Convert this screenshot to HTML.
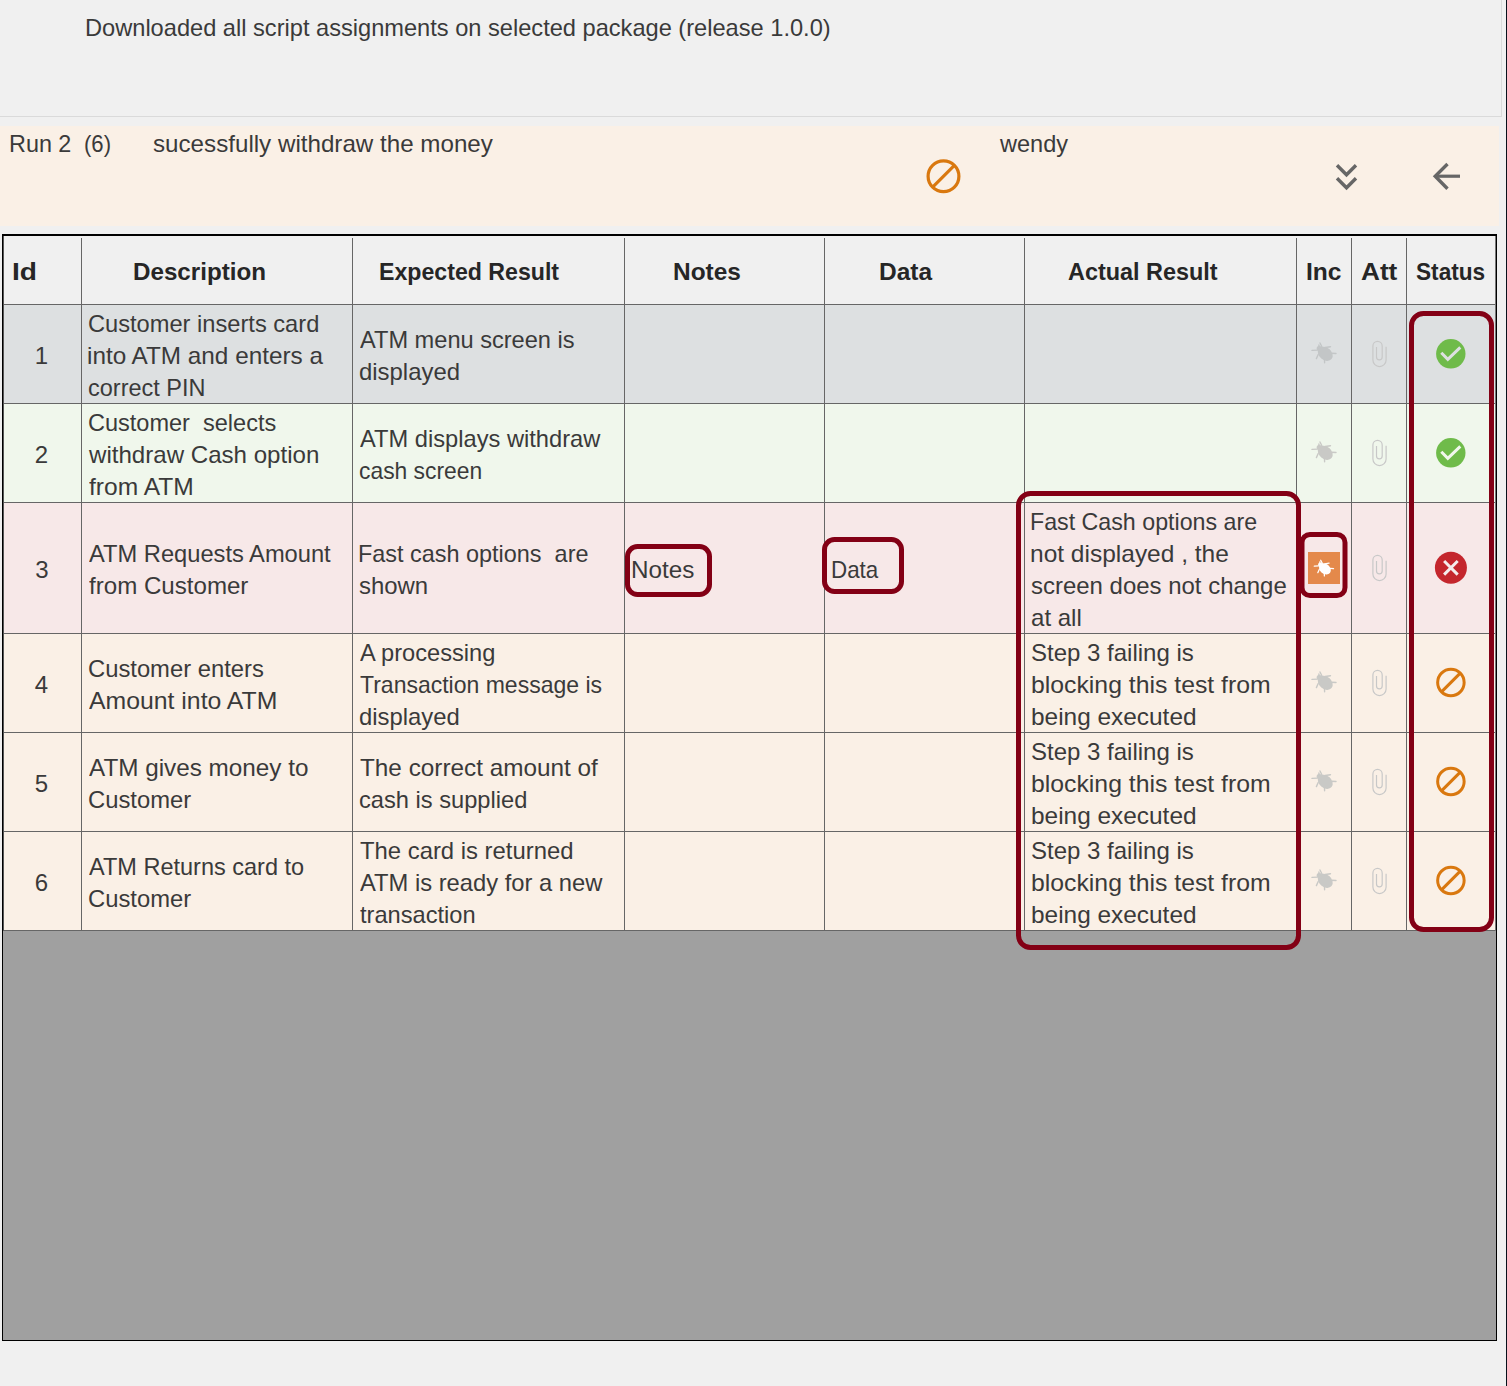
<!DOCTYPE html>
<html><head><meta charset="utf-8"><style>
html,body{margin:0;padding:0;}
body{width:1507px;height:1386px;position:relative;overflow:hidden;background:#f0f0f0;font-family:"Liberation Sans",sans-serif;font-size:24px;color:#3a3a3a;}
.a{position:absolute;}
.t{position:absolute;white-space:pre;line-height:32px;transform-origin:0 0;}
.b{font-weight:bold;color:#262626;}
</style></head><body>

<div class="a" style="left:0;top:116px;width:1501px;height:1px;background:#dadada"></div>
<div class="a" style="left:1501px;top:0;width:1px;height:117px;background:#dadada"></div>
<div class="a" style="left:1506px;top:0;width:1px;height:1386px;background:#07101a"></div>
<div class="a" style="left:0;top:126px;width:1499px;height:100px;background:#faf0e6"></div>
<div class="a" style="left:2px;top:234px;width:1495px;height:1107px;background:#a0a0a0;box-sizing:border-box;border:1px solid #000;border-top-width:2px"></div>
<div class="a" style="left:3px;top:236px;width:1493px;height:68px;background:#f0f0f0"></div>
<div class="a" style="left:3px;top:304px;width:1493px;height:1px;background:#666666"></div>
<div class="a" style="left:3px;top:305px;width:1493px;height:98px;background:#dde0e1"></div>
<div class="a" style="left:3px;top:403px;width:1493px;height:1px;background:#666666"></div>
<div class="a" style="left:3px;top:404px;width:1493px;height:98px;background:#f0f7ec"></div>
<div class="a" style="left:3px;top:502px;width:1493px;height:1px;background:#666666"></div>
<div class="a" style="left:3px;top:503px;width:1493px;height:130px;background:#f7e8e8"></div>
<div class="a" style="left:3px;top:633px;width:1493px;height:1px;background:#666666"></div>
<div class="a" style="left:3px;top:634px;width:1493px;height:98px;background:#faf0e6"></div>
<div class="a" style="left:3px;top:732px;width:1493px;height:1px;background:#666666"></div>
<div class="a" style="left:3px;top:733px;width:1493px;height:98px;background:#faf0e6"></div>
<div class="a" style="left:3px;top:831px;width:1493px;height:1px;background:#666666"></div>
<div class="a" style="left:3px;top:832px;width:1493px;height:98px;background:#faf0e6"></div>
<div class="a" style="left:3px;top:930px;width:1493px;height:1px;background:#666666"></div>
<div class="a" style="left:81px;top:238px;width:1px;height:693px;background:#666666"></div>
<div class="a" style="left:352px;top:238px;width:1px;height:693px;background:#666666"></div>
<div class="a" style="left:624px;top:238px;width:1px;height:693px;background:#666666"></div>
<div class="a" style="left:824px;top:238px;width:1px;height:693px;background:#666666"></div>
<div class="a" style="left:1024px;top:238px;width:1px;height:693px;background:#666666"></div>
<div class="a" style="left:1296px;top:238px;width:1px;height:693px;background:#666666"></div>
<div class="a" style="left:1351px;top:238px;width:1px;height:693px;background:#666666"></div>
<div class="a" style="left:1406px;top:238px;width:1px;height:693px;background:#666666"></div>
<div class="a" style="left:3px;top:236px;width:1px;height:695px;background:#555"></div>
<div class="a" style="left:1495px;top:236px;width:1px;height:695px;background:#777"></div>
<div class="t" style="left:85.22px;top:12px;transform:scaleX(0.9840)">Downloaded all script assignments on selected package (release 1.0.0)</div>
<div class="t" style="left:8.64px;top:128px;transform:scaleX(0.9738)">Run 2</div>
<div class="t" style="left:83.89px;top:128px;transform:scaleX(0.9222)">(6)</div>
<div class="t" style="left:152.80px;top:128px;transform:scaleX(1.0071)">sucessfully withdraw the money</div>
<div class="t" style="left:1000.40px;top:128px;transform:scaleX(0.9800)">wendy</div>
<div class="t b" style="left:12.31px;top:256px;transform:scaleX(1.1722)">Id</div>
<div class="t b" style="left:132.79px;top:256px;transform:scaleX(1.0078)">Description</div>
<div class="t b" style="left:379.46px;top:256px;transform:scaleX(0.9643)">Expected Result</div>
<div class="t b" style="left:672.97px;top:256px;transform:scaleX(1.0172)">Notes</div>
<div class="t b" style="left:879.36px;top:256px;transform:scaleX(1.0200)">Data</div>
<div class="t b" style="left:1067.60px;top:256px;transform:scaleX(0.9752)">Actual Result</div>
<div class="t b" style="left:1305.76px;top:256px;transform:scaleX(1.0250)">Inc</div>
<div class="t b" style="left:1360.54px;top:256px;transform:scaleX(1.0906)">Att</div>
<div class="t b" style="left:1416.03px;top:256px;transform:scaleX(0.9431)">Status</div>
<div class="t" style="left:34.70px;top:340px;transform:scaleX(1.0000)">1</div>
<div class="t" style="left:34.70px;top:439px;transform:scaleX(1.0000)">2</div>
<div class="t" style="left:35.20px;top:554px;transform:scaleX(1.0000)">3</div>
<div class="t" style="left:34.70px;top:669px;transform:scaleX(1.0000)">4</div>
<div class="t" style="left:34.70px;top:768px;transform:scaleX(1.0000)">5</div>
<div class="t" style="left:34.70px;top:867px;transform:scaleX(1.0000)">6</div>
<div class="t" style="left:88.01px;top:308px;transform:scaleX(0.9853)">Customer inserts card</div>
<div class="t" style="left:86.97px;top:340px;transform:scaleX(1.0126)">into ATM and enters a</div>
<div class="t" style="left:88.02px;top:372px;transform:scaleX(0.9786)">correct PIN</div>
<div class="t" style="left:360.00px;top:324px;transform:scaleX(0.9830)">ATM menu screen is</div>
<div class="t" style="left:359.00px;top:356px;transform:scaleX(0.9960)">displayed</div>
<div class="t" style="left:88.02px;top:407px;transform:scaleX(0.9800)">Customer  selects</div>
<div class="t" style="left:89.00px;top:439px;transform:scaleX(1.0039)">withdraw Cash option</div>
<div class="t" style="left:89.00px;top:471px;transform:scaleX(1.0248)">from ATM</div>
<div class="t" style="left:360.00px;top:423px;transform:scaleX(0.9865)">ATM displays withdraw</div>
<div class="t" style="left:359.05px;top:455px;transform:scaleX(0.9520)">cash screen</div>
<div class="t" style="left:89.00px;top:538px;transform:scaleX(0.9865)">ATM Requests Amount</div>
<div class="t" style="left:89.00px;top:570px;transform:scaleX(1.0044)">from Customer</div>
<div class="t" style="left:358.05px;top:538px;transform:scaleX(0.9760)">Fast cash options  are</div>
<div class="t" style="left:359.00px;top:570px;transform:scaleX(0.9970)">shown</div>
<div class="t" style="left:630.58px;top:554px;transform:scaleX(1.0100)">Notes</div>
<div class="t" style="left:831.13px;top:554px;transform:scaleX(0.9327)">Data</div>
<div class="t" style="left:1030.07px;top:506px;transform:scaleX(0.9672)">Fast Cash options are</div>
<div class="t" style="left:1029.96px;top:538px;transform:scaleX(1.0208)">not displayed , the</div>
<div class="t" style="left:1031.00px;top:570px;transform:scaleX(0.9984)">screen does not change</div>
<div class="t" style="left:1031.00px;top:602px;transform:scaleX(1.0021)">at all</div>
<div class="t" style="left:88.01px;top:653px;transform:scaleX(0.9909)">Customer enters</div>
<div class="t" style="left:89.00px;top:685px;transform:scaleX(1.0331)">Amount into ATM</div>
<div class="t" style="left:360.00px;top:637px;transform:scaleX(0.9846)">A processing</div>
<div class="t" style="left:360.00px;top:669px;transform:scaleX(0.9583)">Transaction message is</div>
<div class="t" style="left:359.01px;top:701px;transform:scaleX(0.9929)">displayed</div>
<div class="t" style="left:1031.00px;top:637px;transform:scaleX(1.0000)">Step 3 failing is</div>
<div class="t" style="left:1030.97px;top:669px;transform:scaleX(1.0326)">blocking this test from</div>
<div class="t" style="left:1030.98px;top:701px;transform:scaleX(1.0169)">being executed</div>
<div class="t" style="left:1031.00px;top:736px;transform:scaleX(1.0000)">Step 3 failing is</div>
<div class="t" style="left:1030.97px;top:768px;transform:scaleX(1.0326)">blocking this test from</div>
<div class="t" style="left:1030.98px;top:800px;transform:scaleX(1.0169)">being executed</div>
<div class="t" style="left:1031.00px;top:835px;transform:scaleX(1.0000)">Step 3 failing is</div>
<div class="t" style="left:1030.97px;top:867px;transform:scaleX(1.0326)">blocking this test from</div>
<div class="t" style="left:1030.98px;top:899px;transform:scaleX(1.0169)">being executed</div>
<div class="t" style="left:89.00px;top:752px;transform:scaleX(1.0116)">ATM gives money to</div>
<div class="t" style="left:88.01px;top:784px;transform:scaleX(0.9913)">Customer</div>
<div class="t" style="left:360.00px;top:752px;transform:scaleX(1.0128)">The correct amount of</div>
<div class="t" style="left:359.01px;top:784px;transform:scaleX(0.9857)">cash is supplied</div>
<div class="t" style="left:89.00px;top:851px;transform:scaleX(0.9795)">ATM Returns card to</div>
<div class="t" style="left:88.01px;top:883px;transform:scaleX(0.9913)">Customer</div>
<div class="t" style="left:360.00px;top:835px;transform:scaleX(0.9939)">The card is returned</div>
<div class="t" style="left:360.00px;top:867px;transform:scaleX(0.9894)">ATM is ready for a new</div>
<div class="t" style="left:360.00px;top:899px;transform:scaleX(0.9853)">transaction</div>
<svg class="a" style="left:0;top:0" width="1507" height="1386" viewBox="0 0 1507 1386"><circle cx="943.5" cy="176.2" r="15.4" fill="none" stroke="#d9780f" stroke-width="3.2"/><line x1="932.6105555697271" y1="187.0894444302728" x2="954.3894444302729" y2="165.31055556972717" stroke="#d9780f" stroke-width="3.2"/><polyline points="1337,165.3 1346.5,174.8 1356,165.3" fill="none" stroke="#666" stroke-width="3.4"/><polyline points="1337,178.3 1346.5,187.8 1356,178.3" fill="none" stroke="#666" stroke-width="3.4"/><polyline points="1447.5,164 1435.2,176.2 1447.5,188.8" fill="none" stroke="#666" stroke-width="3.4"/><line x1="1435" y1="176.2" x2="1460" y2="176.2" stroke="#666" stroke-width="3.2"/><g transform="translate(1324.5,353.0) scale(1.0)" fill="#c3c6c7" stroke="#c3c6c7" stroke-linecap="round"><ellipse cx="0.8" cy="0.8" rx="8.2" ry="6.2" transform="rotate(40 0.8 0.8)" stroke="none"/><ellipse cx="-4.8" cy="-4.2" rx="3.2" ry="2.6" transform="rotate(40 -4.8 -4.2)" stroke="none"/><path d="M-4.5,-10 L-2.5,-6 M-5.6,-8 L-5.4,-5 M-12.5,-2.6 L-7,-2.9 M0.5,-5.5 L6,-6.3 M7.3,0.2 L11.5,0.5 M-6.3,1.5 L-8.1,5.6 M0,6.6 L0.1,9.7" fill="none" stroke-width="1.4"/></g><path transform="translate(0.0,-0.5)" d="M1376.5,347.5 V357.5 A2.85,2.85 0 0 0 1382.2,357.5 V346.5 A4.65,4.65 0 0 0 1372.9,346.5 V360.5 A6.6,6.6 0 0 0 1386.1,360.5 V347.2" fill="none" stroke="#c8c8c8" stroke-width="1.2"/><g transform="translate(1324.5,452.0) scale(1.0)" fill="#c9c9c6" stroke="#c9c9c6" stroke-linecap="round"><ellipse cx="0.8" cy="0.8" rx="8.2" ry="6.2" transform="rotate(40 0.8 0.8)" stroke="none"/><ellipse cx="-4.8" cy="-4.2" rx="3.2" ry="2.6" transform="rotate(40 -4.8 -4.2)" stroke="none"/><path d="M-4.5,-10 L-2.5,-6 M-5.6,-8 L-5.4,-5 M-12.5,-2.6 L-7,-2.9 M0.5,-5.5 L6,-6.3 M7.3,0.2 L11.5,0.5 M-6.3,1.5 L-8.1,5.6 M0,6.6 L0.1,9.7" fill="none" stroke-width="1.4"/></g><path transform="translate(0.0,98.5)" d="M1376.5,347.5 V357.5 A2.85,2.85 0 0 0 1382.2,357.5 V346.5 A4.65,4.65 0 0 0 1372.9,346.5 V360.5 A6.6,6.6 0 0 0 1386.1,360.5 V347.2" fill="none" stroke="#c8c8c8" stroke-width="1.2"/><path transform="translate(0.0,213.5)" d="M1376.5,347.5 V357.5 A2.85,2.85 0 0 0 1382.2,357.5 V346.5 A4.65,4.65 0 0 0 1372.9,346.5 V360.5 A6.6,6.6 0 0 0 1386.1,360.5 V347.2" fill="none" stroke="#c8c8c8" stroke-width="1.2"/><g transform="translate(1324.5,682.0) scale(1.0)" fill="#c9c9c6" stroke="#c9c9c6" stroke-linecap="round"><ellipse cx="0.8" cy="0.8" rx="8.2" ry="6.2" transform="rotate(40 0.8 0.8)" stroke="none"/><ellipse cx="-4.8" cy="-4.2" rx="3.2" ry="2.6" transform="rotate(40 -4.8 -4.2)" stroke="none"/><path d="M-4.5,-10 L-2.5,-6 M-5.6,-8 L-5.4,-5 M-12.5,-2.6 L-7,-2.9 M0.5,-5.5 L6,-6.3 M7.3,0.2 L11.5,0.5 M-6.3,1.5 L-8.1,5.6 M0,6.6 L0.1,9.7" fill="none" stroke-width="1.4"/></g><path transform="translate(0.0,328.5)" d="M1376.5,347.5 V357.5 A2.85,2.85 0 0 0 1382.2,357.5 V346.5 A4.65,4.65 0 0 0 1372.9,346.5 V360.5 A6.6,6.6 0 0 0 1386.1,360.5 V347.2" fill="none" stroke="#c8c8c8" stroke-width="1.2"/><g transform="translate(1324.5,781.0) scale(1.0)" fill="#c9c9c6" stroke="#c9c9c6" stroke-linecap="round"><ellipse cx="0.8" cy="0.8" rx="8.2" ry="6.2" transform="rotate(40 0.8 0.8)" stroke="none"/><ellipse cx="-4.8" cy="-4.2" rx="3.2" ry="2.6" transform="rotate(40 -4.8 -4.2)" stroke="none"/><path d="M-4.5,-10 L-2.5,-6 M-5.6,-8 L-5.4,-5 M-12.5,-2.6 L-7,-2.9 M0.5,-5.5 L6,-6.3 M7.3,0.2 L11.5,0.5 M-6.3,1.5 L-8.1,5.6 M0,6.6 L0.1,9.7" fill="none" stroke-width="1.4"/></g><path transform="translate(0.0,427.5)" d="M1376.5,347.5 V357.5 A2.85,2.85 0 0 0 1382.2,357.5 V346.5 A4.65,4.65 0 0 0 1372.9,346.5 V360.5 A6.6,6.6 0 0 0 1386.1,360.5 V347.2" fill="none" stroke="#c8c8c8" stroke-width="1.2"/><g transform="translate(1324.5,880.0) scale(1.0)" fill="#c9c9c6" stroke="#c9c9c6" stroke-linecap="round"><ellipse cx="0.8" cy="0.8" rx="8.2" ry="6.2" transform="rotate(40 0.8 0.8)" stroke="none"/><ellipse cx="-4.8" cy="-4.2" rx="3.2" ry="2.6" transform="rotate(40 -4.8 -4.2)" stroke="none"/><path d="M-4.5,-10 L-2.5,-6 M-5.6,-8 L-5.4,-5 M-12.5,-2.6 L-7,-2.9 M0.5,-5.5 L6,-6.3 M7.3,0.2 L11.5,0.5 M-6.3,1.5 L-8.1,5.6 M0,6.6 L0.1,9.7" fill="none" stroke-width="1.4"/></g><path transform="translate(0.0,526.5)" d="M1376.5,347.5 V357.5 A2.85,2.85 0 0 0 1382.2,357.5 V346.5 A4.65,4.65 0 0 0 1372.9,346.5 V360.5 A6.6,6.6 0 0 0 1386.1,360.5 V347.2" fill="none" stroke="#c8c8c8" stroke-width="1.2"/><rect x="1308" y="552" width="32" height="32" fill="#e4894b"/><g transform="translate(1324.3,568.2) scale(0.8)" fill="#ffffff" stroke="#ffffff" stroke-linecap="round"><ellipse cx="0.8" cy="0.8" rx="8.2" ry="6.2" transform="rotate(40 0.8 0.8)" stroke="none"/><ellipse cx="-4.8" cy="-4.2" rx="3.2" ry="2.6" transform="rotate(40 -4.8 -4.2)" stroke="none"/><path d="M-4.5,-10 L-2.5,-6 M-5.6,-8 L-5.4,-5 M-12.5,-2.6 L-7,-2.9 M0.5,-5.5 L6,-6.3 M7.3,0.2 L11.5,0.5 M-6.3,1.5 L-8.1,5.6 M0,6.6 L0.1,9.7" fill="none" stroke-width="1.6"/></g><circle cx="1450.8" cy="353.8" r="14.7" fill="#6fbb4a"/><polyline points="1441.3,352.7 1447.8,359.3 1460.3,347.3" fill="none" stroke="#dde0e1" stroke-width="3"/><circle cx="1450.8" cy="452.8" r="14.7" fill="#6fbb4a"/><polyline points="1441.3,451.7 1447.8,458.3 1460.3,446.3" fill="none" stroke="#f0f7ec" stroke-width="3"/><circle cx="1450.9" cy="567.8" r="16" fill="#c4262d"/><path d="M1444.1000000000001,561.0 L1457.7,574.5999999999999 M1457.7,561.0 L1444.1000000000001,574.5999999999999" stroke="#f4ecec" stroke-width="3"/><circle cx="1450.9" cy="682.5" r="13.25" fill="none" stroke="#d9780f" stroke-width="3"/><line x1="1441.5308351492783" y1="691.8691648507217" x2="1460.2691648507218" y2="673.1308351492783" stroke="#d9780f" stroke-width="3"/><circle cx="1450.9" cy="781.5" r="13.25" fill="none" stroke="#d9780f" stroke-width="3"/><line x1="1441.5308351492783" y1="790.8691648507217" x2="1460.2691648507218" y2="772.1308351492783" stroke="#d9780f" stroke-width="3"/><circle cx="1450.9" cy="880.5" r="13.25" fill="none" stroke="#d9780f" stroke-width="3"/><line x1="1441.5308351492783" y1="889.8691648507217" x2="1460.2691648507218" y2="871.1308351492783" stroke="#d9780f" stroke-width="3"/><rect x="1411.5" y="313.5" width="80" height="616" rx="12" ry="12" fill="none" stroke="#830015" stroke-width="5"/><rect x="1018.5" y="493.5" width="280" height="454" rx="12" ry="12" fill="none" stroke="#830015" stroke-width="5"/><rect x="627.5" y="546.5" width="82" height="48" rx="10" ry="10" fill="none" stroke="#830015" stroke-width="5"/><rect x="824.5" y="539.5" width="77" height="52" rx="10" ry="10" fill="none" stroke="#830015" stroke-width="5"/><rect x="1302.0" y="534.5" width="43" height="61" rx="8" ry="8" fill="none" stroke="#830015" stroke-width="5"/></svg>
</body></html>
